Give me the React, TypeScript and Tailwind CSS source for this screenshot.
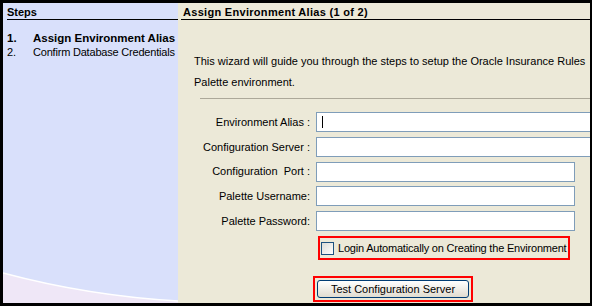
const fields = [
  { label: 'Environment Alias :', wide: true, cursor: true },
  { label: 'Configuration Server :', wide: true },
  { label: 'Configuration\u00a0 Port :' },
  { label: 'Palette Username:' },
  { label: 'Palette Password:' },
];

function Swoosh() {
  return (
    <svg width="175" height="44" viewBox="0 0 175 44" className="mt-auto block shrink-0">
      <path d="M0 14 C45 26 105 38 175 42 L175 44 L0 44 Z" fill="#efe7f7" />
      <path d="M0 14 C45 26 105 38 175 42" stroke="#ffffff" strokeWidth="1.5" fill="none" />
    </svg>
  );
}

export default function App() {
  return (
    <div className="w-[592px] h-[306px] bg-black pt-[3px] pl-[3px] pb-[3px] pr-[2px] flex font-['Liberation_Sans',Arial,sans-serif] text-[11px] text-black overflow-hidden">
      {/* Steps */}
      <div className="w-[175px] shrink-0 bg-[#d9e0fb] flex flex-col overflow-hidden">
        <div className="ml-[4px] mt-[3px] leading-[13px] font-bold border-b border-black">Steps</div>
        <div className="ml-[4px] mt-[11px] leading-[14px] whitespace-nowrap">
          <div className="flex font-bold text-[11.5px]">
            <span className="w-[26px] shrink-0">1.</span>
            <span>Assign Environment Alias</span>
          </div>
          <div className="flex">
            <span className="w-[26px] shrink-0">2.</span>
            <span className="tracking-[-0.2px]">Confirm Database Credentials</span>
          </div>
        </div>
        <Swoosh />
      </div>

      {/* Wizard page */}
      <div className="flex-1 bg-[#ece9d8] flex flex-col overflow-hidden">
        <div className="ml-[3px] pl-[2px] mt-[3px] leading-[13px] font-bold tracking-[0.3px] border-b border-black whitespace-nowrap">
          Assign Environment Alias (1 of 2)
        </div>
        <div className="pl-[16px] mt-[31px] leading-[21px] whitespace-nowrap">
          <div>This wizard will guide you through the steps to setup the Oracle Insurance Rules</div>
          <div>Palette environment.</div>
        </div>
        <div className="ml-[22px] mt-[5px] h-px bg-[#aca899]" />

        <div className="mt-[13px] grid grid-cols-[132px_auto] gap-x-[6px] gap-y-[4.75px]">
          {fields.map((f) => (
            <div key={f.label} className="contents">
              <div className="h-[20px] flex items-center justify-end whitespace-nowrap">{f.label}</div>
              <div
                className={`h-[20px] bg-white border border-[#7f9db9] flex items-center pl-[5px] ${
                  f.wide ? 'w-[300px]' : 'w-[259px]'
                }`}
              >
                {f.cursor && <span className="w-px h-[12px] bg-black" />}
              </div>
            </div>
          ))}
        </div>

        <div className="ml-[140px] mt-[5px] w-[252px] h-[24px] border-2 border-[#ff0000] flex items-center pl-[1px] gap-[4px] whitespace-nowrap">
          <span className="w-[13px] h-[13px] shrink-0 border border-[#1c5180] bg-gradient-to-br from-[#dcdcd7] to-white" />
          <span className="tracking-[-0.2px]">Login Automatically on Creating the Environment</span>
        </div>

        <div className="ml-[135px] mt-[16px] w-[160px] h-[26px] shrink-0 border-2 border-[#ff0000] p-[2px]">
          <button className="w-full h-full rounded-[3px] border border-[#003c74] bg-gradient-to-b from-white to-[#e0dcd0] text-[11px] leading-none">
            Test Configuration Server
          </button>
        </div>
      </div>
    </div>
  );
}
